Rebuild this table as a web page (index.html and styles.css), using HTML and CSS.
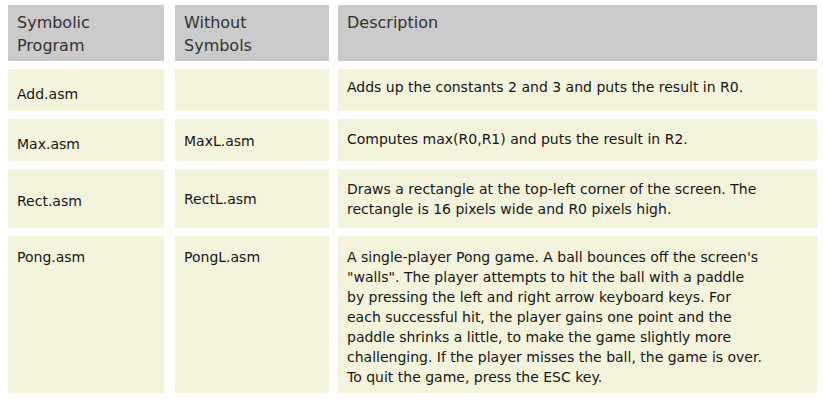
FILE: index.html
```html
<!DOCTYPE html>
<html lang="en">
<head>
<meta charset="utf-8">
<title>Programs</title>
<link rel="stylesheet" href="styles.css">
</head>
<body>
<div class="table">
  <div class="cell head">Symbolic<br>Program</div>
  <div class="cell head">Without<br>Symbols</div>
  <div class="cell head">Description</div>

  <div class="cell r1">Add.asm</div>
  <div class="cell r1"></div>
  <div class="cell desc">Adds up the constants 2 and 3 and puts the result in R0.</div>

  <div class="cell r1">Max.asm</div>
  <div class="cell r2b">MaxL.asm</div>
  <div class="cell desc d2">Computes max(R0,R1) and puts the result in R2.</div>

  <div class="cell r3">Rect.asm</div>
  <div class="cell r3b">RectL.asm</div>
  <div class="cell desc d3">Draws a rectangle at the top-left corner of the screen. The rectangle is 16 pixels wide and R0 pixels high.</div>

  <div class="cell r4">Pong.asm</div>
  <div class="cell r4">PongL.asm</div>
  <div class="cell desc r4">A single-player Pong game. A ball bounces off the screen's "walls". The player attempts to hit the ball with a paddle by pressing the left and right arrow keyboard keys. For each successful hit, the player gains one point and the paddle shrinks a little, to make the game slightly more challenging. If the player misses the ball, the game is over. To quit the game, press the ESC key.</div>
</div>
</body>
</html>
```

FILE: styles.css
```css
html, body {
  margin: 0;
  background: #ffffff;
}

body {
  padding: 5px 0 0 8px;
  font-family: "DejaVu Sans", sans-serif;
  font-size: 14px;
  line-height: 20px;
  color: #161616;
}

.table {
  display: grid;
  grid-template-columns: 158px 154px 479px;
  grid-template-rows: 56px 42px 42px 59px 157px;
  column-gap: 9px;
  row-gap: 8px;
}

.cell {
  background: #f4f4dc;
  padding: 8px 12px 0 9px;
  box-sizing: border-box;
}

.cell:nth-child(3n+1) {
  width: 156px;
}

.desc {
  padding-right: 54px;
}

.head {
  background: #cbcbcb;
  color: #333333;
  font-size: 16px;
  line-height: 23px;
  padding-top: 6px;
}

.r1 { padding-top: 15px; }
.r2b { padding-top: 12px; }
.d2 { padding-top: 10px; }
.r3 { padding-top: 22px; }
.r3b { padding-top: 20px; }
.d3 { padding-top: 10px; }
.r4 { padding-top: 11px; }
```
